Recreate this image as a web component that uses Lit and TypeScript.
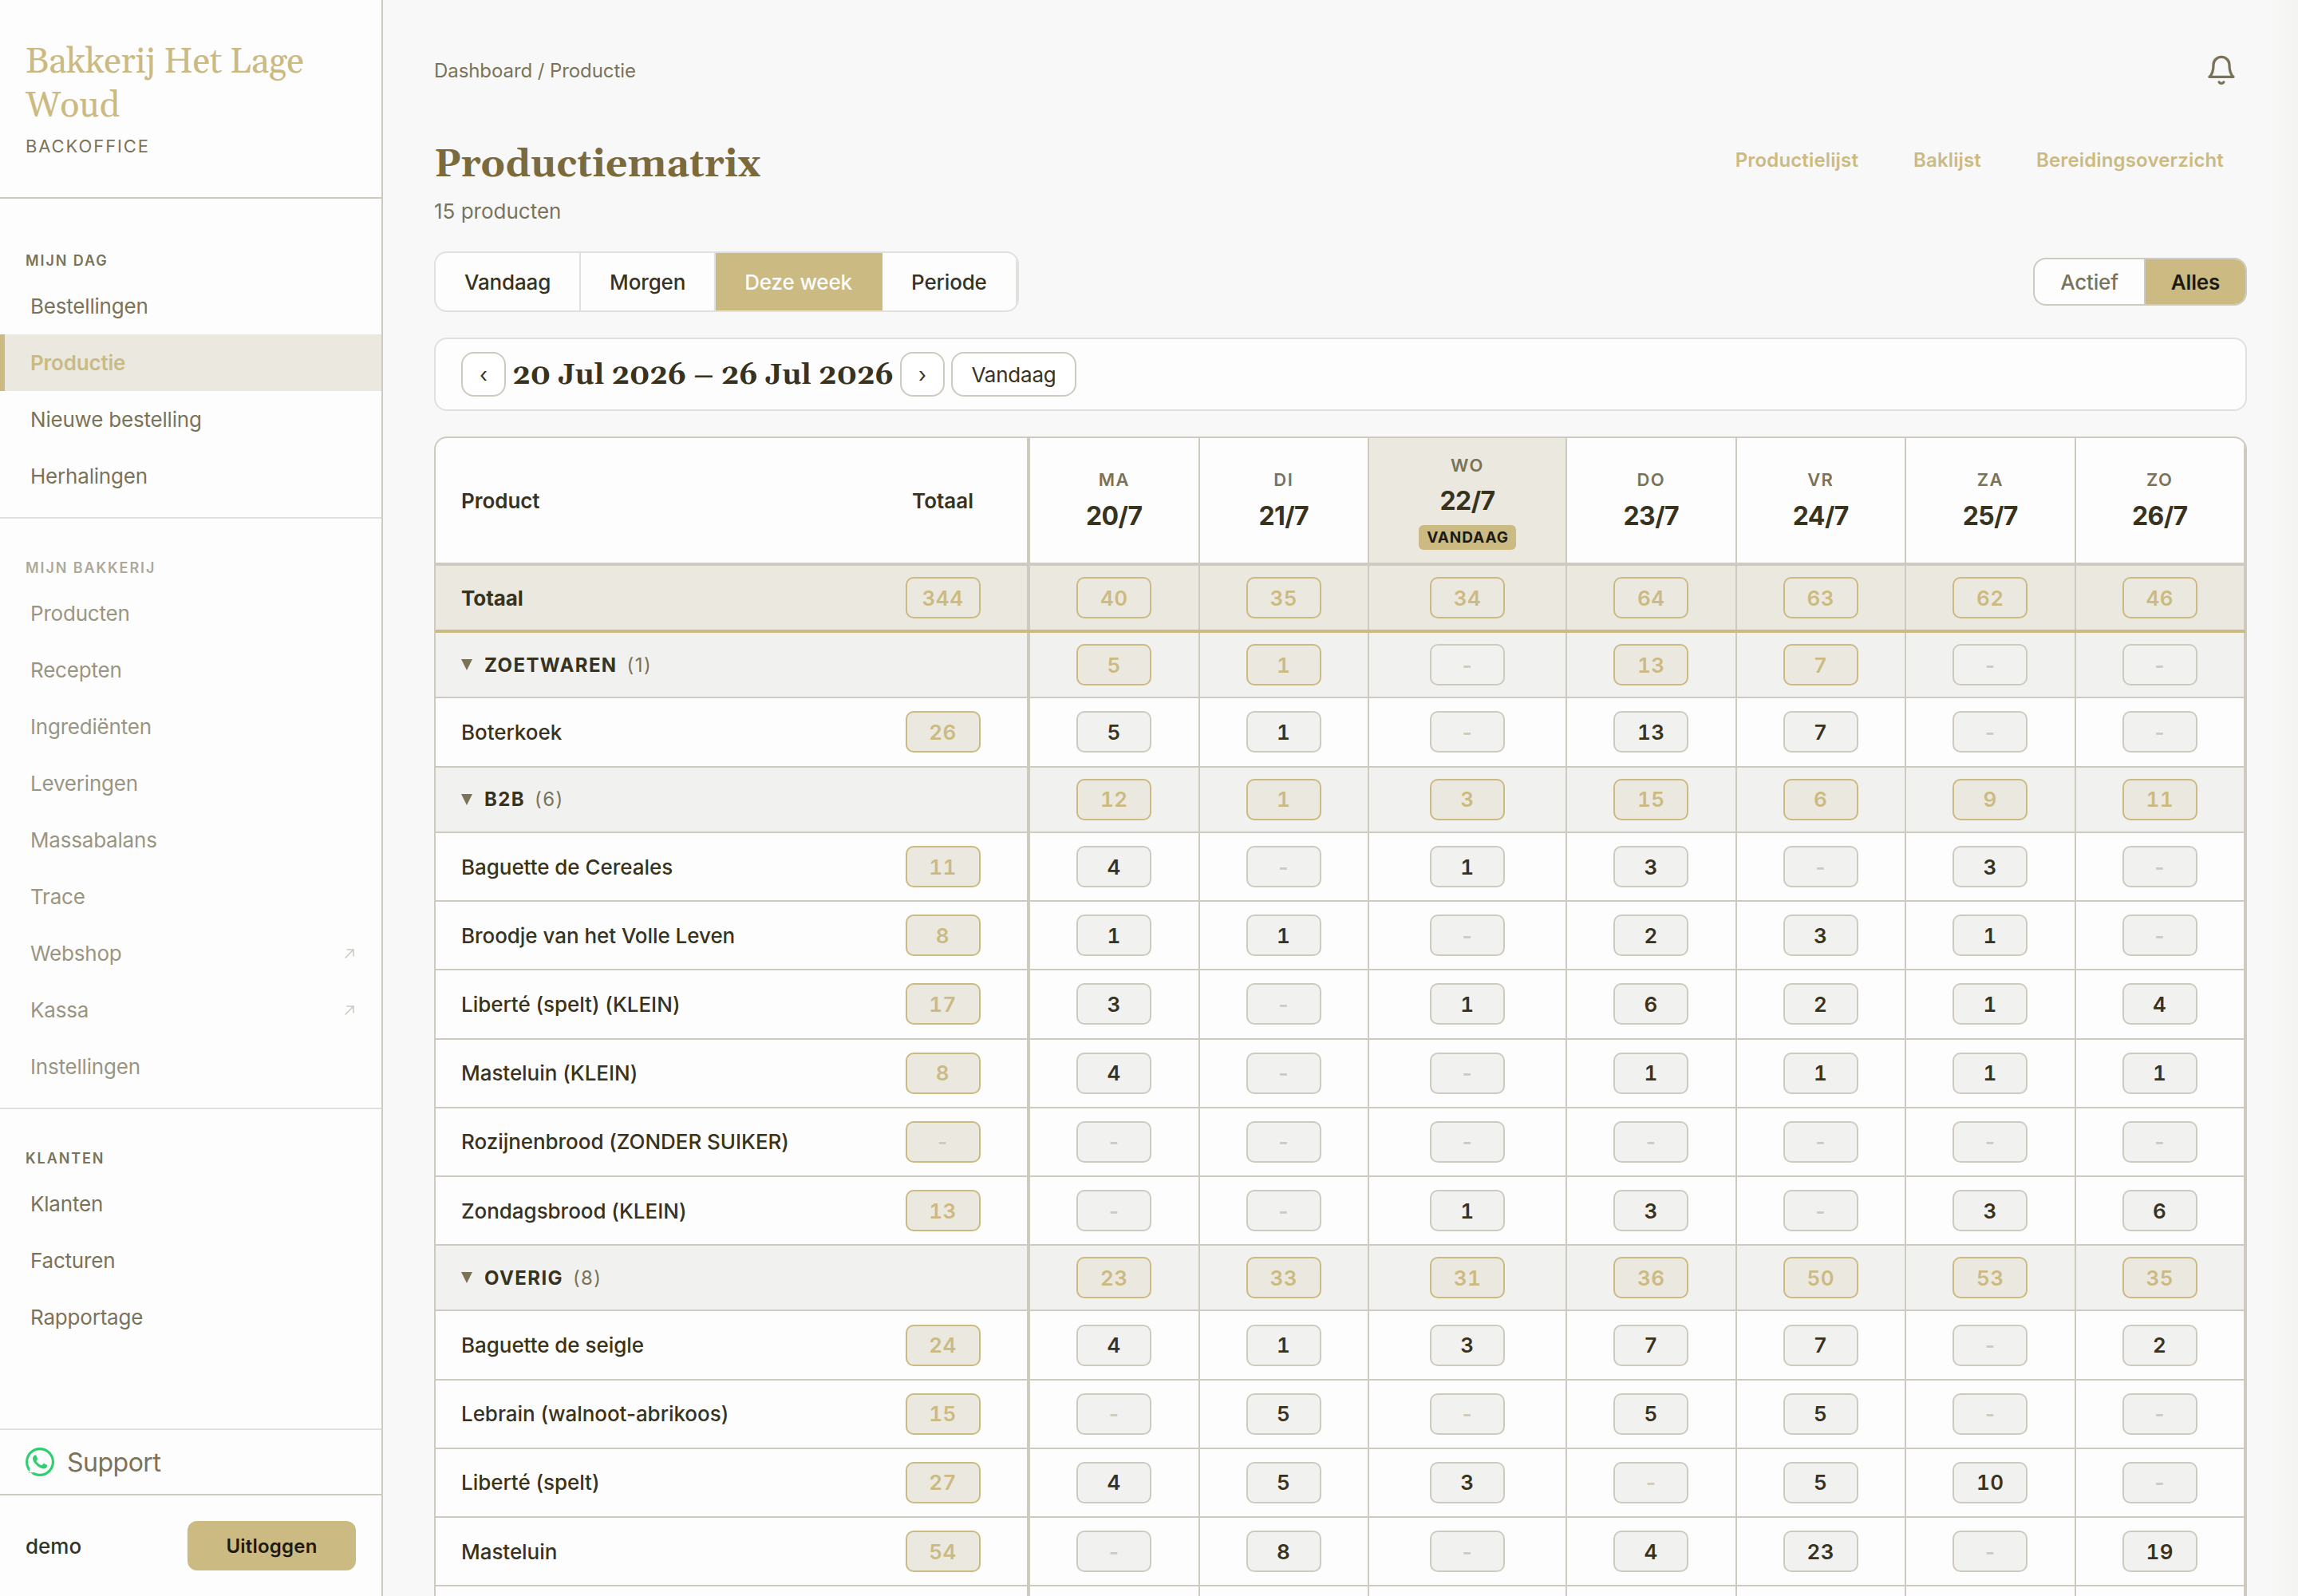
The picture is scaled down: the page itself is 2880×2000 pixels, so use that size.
import { LitElement, html, css, nothing } from 'lit';
import { customElement, property } from 'lit/decorators.js';
import { classMap } from 'lit/directives/class-map.js';

interface NavItem {
  label: string;
  active?: boolean;
  external?: boolean;
}

interface NavSection {
  title: string;
  muted?: boolean;
  items: NavItem[];
}

interface Group {
  name: string;
  count: number;
  days: number[];
  products: { name: string; total: number; days: number[] }[];
}

const NAV: NavSection[] = [
  {
    title: 'Mijn dag',
    items: [
      { label: 'Bestellingen' },
      { label: 'Productie', active: true },
      { label: 'Nieuwe bestelling' },
      { label: 'Herhalingen' },
    ],
  },
  {
    title: 'Mijn bakkerij',
    muted: true,
    items: [
      { label: 'Producten' },
      { label: 'Recepten' },
      { label: 'Ingrediënten' },
      { label: 'Leveringen' },
      { label: 'Massabalans' },
      { label: 'Trace' },
      { label: 'Webshop', external: true },
      { label: 'Kassa', external: true },
      { label: 'Instellingen' },
    ],
  },
  {
    title: 'Klanten',
    items: [{ label: 'Klanten' }, { label: 'Facturen' }, { label: 'Rapportage' }],
  },
];

const DAYS = [
  { name: 'ma', date: '20/7' },
  { name: 'di', date: '21/7' },
  { name: 'wo', date: '22/7', today: true },
  { name: 'do', date: '23/7' },
  { name: 'vr', date: '24/7' },
  { name: 'za', date: '25/7' },
  { name: 'zo', date: '26/7' },
];

const TOTALS = [40, 35, 34, 64, 63, 62, 46];

const GROUPS: Group[] = [
  {
    name: 'Zoetwaren',
    count: 1,
    days: [5, 1, 0, 13, 7, 0, 0],
    products: [{ name: 'Boterkoek', total: 26, days: [5, 1, 0, 13, 7, 0, 0] }],
  },
  {
    name: 'B2B',
    count: 6,
    days: [12, 1, 3, 15, 6, 9, 11],
    products: [
      { name: 'Baguette de Cereales', total: 11, days: [4, 0, 1, 3, 0, 3, 0] },
      { name: 'Broodje van het Volle Leven', total: 8, days: [1, 1, 0, 2, 3, 1, 0] },
      { name: 'Liberté (spelt) (KLEIN)', total: 17, days: [3, 0, 1, 6, 2, 1, 4] },
      { name: 'Masteluin (KLEIN)', total: 8, days: [4, 0, 0, 1, 1, 1, 1] },
      { name: 'Rozijnenbrood (ZONDER SUIKER)', total: 0, days: [0, 0, 0, 0, 0, 0, 0] },
      { name: 'Zondagsbrood (KLEIN)', total: 13, days: [0, 0, 1, 3, 0, 3, 6] },
    ],
  },
  {
    name: 'Overig',
    count: 8,
    days: [23, 33, 31, 36, 50, 53, 35],
    products: [
      { name: 'Baguette de seigle', total: 24, days: [4, 1, 3, 7, 7, 0, 2] },
      { name: 'Lebrain (walnoot-abrikoos)', total: 15, days: [0, 5, 0, 5, 5, 0, 0] },
      { name: 'Liberté (spelt)', total: 27, days: [4, 5, 3, 0, 5, 10, 0] },
      { name: 'Masteluin', total: 54, days: [0, 8, 0, 4, 23, 0, 19] },
    ],
  },
];

@customElement('side-nav')
class SideNav extends LitElement {
  static styles = css`
    :host {
      display: flex;
      flex-direction: column;
      box-sizing: border-box;
      width: 480px;
      height: 100%;
      background: var(--surface);
      border-right: 2px solid var(--line);
    }

    .brand {
      box-sizing: border-box;
      height: 249px;
      padding: 50px 32px 0;
      border-bottom: 2px solid var(--line);
    }

    .brand-name {
      font: 400 44.8px/55px var(--serif);
      letter-spacing: -0.4px;
      color: var(--gold);
    }

    .brand-sub {
      margin-top: 9px;
      font-size: 22px;
      line-height: 28px;
      letter-spacing: 1.9px;
      text-transform: uppercase;
      color: var(--muted);
    }

    nav {
      flex: 1;
      padding-top: 16px;
    }

    .section {
      padding: 48px 0 16px;
      border-bottom: 2px solid var(--line-soft);
    }

    .section:last-child { border-bottom: none; }

    .section-title {
      padding-left: 32px;
      margin-bottom: 7px;
      font-size: 18px;
      font-weight: 600;
      line-height: 28px;
      letter-spacing: 1.9px;
      text-transform: uppercase;
      color: var(--muted);
    }

    .item {
      display: flex;
      align-items: center;
      justify-content: space-between;
      box-sizing: border-box;
      height: 71px;
      padding: 0 32px;
      border-left: 6px solid transparent;
      font-size: 26px;
      letter-spacing: -0.2px;
      color: var(--muted);
    }

    .item.active {
      background: var(--sand);
      border-left-color: var(--gold);
      font-weight: 600;
      color: var(--gold);
    }

    .muted .section-title { opacity: 0.6; }
    .muted .item { opacity: 0.75; }

    .external {
      width: 12px;
      height: 12px;
      margin-right: 2px;
      opacity: 0.5;
    }

    .support {
      display: flex;
      align-items: center;
      gap: 16px;
      height: 80px;
      padding-left: 32px;
      border-top: 2px solid var(--line-soft);
      font-size: 32px;
      letter-spacing: -0.5px;
      color: var(--muted);
    }

    .support svg {
      width: 36px;
      height: 36px;
    }

    .user {
      display: flex;
      align-items: center;
      justify-content: space-between;
      height: 126px;
      padding: 0 32px;
      border-top: 2px solid var(--line);
      font-size: 26px;
      font-weight: 500;
    }

    .logout {
      width: 211px;
      height: 62px;
      border: none;
      border-radius: 12px;
      background: var(--gold);
      font: 600 24px var(--sans);
      letter-spacing: 0.2px;
      color: #1c1a12;
    }
  `;

  render() {
    return html`
      <div class="brand">
        <div class="brand-name">Bakkerij Het Lage Woud</div>
        <div class="brand-sub">Backoffice</div>
      </div>
      <nav>
        ${NAV.map(
          (section) => html`
            <div class=${classMap({ section: true, muted: !!section.muted })}>
              <div class="section-title">${section.title}</div>
              ${section.items.map(
                (item) => html`
                  <div class=${classMap({ item: true, active: !!item.active })}>
                    <span>${item.label}</span>
                    ${item.external
                      ? html`<svg class="external" viewBox="0 0 12 12" fill="none" stroke="currentColor" stroke-width="1.5">
                          <path d="M0.5 11.5L11 1M2.5 1H11V9.5" />
                        </svg>`
                      : nothing}
                  </div>
                `
              )}
            </div>
          `
        )}
      </nav>
      <div class="support">
        <svg viewBox="0 0 24 24" fill="#2fcf70">
          <path d="M17.472 14.382c-.297-.149-1.758-.867-2.03-.967-.273-.099-.471-.148-.67.15-.197.297-.767.966-.94 1.164-.173.199-.347.223-.644.075-.297-.15-1.255-.463-2.39-1.475-.883-.788-1.48-1.761-1.653-2.059-.173-.297-.018-.458.13-.606.134-.133.298-.347.446-.52.149-.174.198-.298.298-.497.099-.198.05-.371-.025-.52-.075-.149-.669-1.612-.916-2.207-.242-.579-.487-.5-.669-.51-.173-.008-.371-.01-.57-.01-.198 0-.52.074-.792.372-.272.297-1.04 1.016-1.04 2.479 0 1.462 1.065 2.875 1.213 3.074.149.198 2.096 3.2 5.077 4.487.709.306 1.262.489 1.694.625.712.227 1.36.195 1.871.118.571-.085 1.758-.719 2.006-1.413.248-.694.248-1.289.173-1.413-.074-.124-.272-.198-.57-.347" />
          <path fill-rule="evenodd" d="M12 0a12 12 0 1 0 0 24 12 12 0 0 0 0-24zM12 2.1a9.9 9.9 0 1 1-4.9 18.5L3.1 21.1 3.7 17.4A9.9 9.9 0 0 1 12 2.1z" />
        </svg>
        <span>Support</span>
      </div>
      <div class="user">
        <span>demo</span>
        <button class="logout">Uitloggen</button>
      </div>
    `;
  }
}

@customElement('qty-box')
class QtyBox extends LitElement {
  static styles = css`
    :host { display: block; }

    .box {
      display: flex;
      align-items: center;
      justify-content: center;
      box-sizing: border-box;
      width: 94px;
      height: 52px;
      border: 2px solid var(--line);
      border-radius: 10px;
      background: var(--cell);
      font-size: 26px;
      font-weight: 600;
      font-variant-numeric: tabular-nums;
      letter-spacing: 0.5px;
      color: var(--ink);
    }

    .box.gold {
      background: var(--sand);
      border-color: var(--gold);
      color: var(--gold);
    }

    .box.empty { color: var(--line); }
  `;

  @property({ type: Number }) value = 0;
  @property({ type: Boolean }) gold = false;

  render() {
    return html`
      <div class=${classMap({ box: true, gold: this.gold, empty: !this.value })}>${this.value || '-'}</div>
    `;
  }
}

@customElement('production-matrix')
class ProductionMatrix extends LitElement {
  static styles = css`
    :host {
      display: block;
      box-sizing: border-box;
      border: 2px solid var(--line);
      border-radius: 16px;
      overflow: hidden;
      background: var(--surface);
    }

    .row {
      display: grid;
      grid-template-columns: 530px 215px 1fr 1fr 248px 1fr 1fr 1fr 1fr;
      box-sizing: border-box;
      height: 86.2px;
      border-bottom: 2px solid var(--line);
    }

    .row > div {
      display: flex;
      align-items: center;
      justify-content: center;
      border-right: 2px solid var(--line);
    }

    .row > .name {
      justify-content: flex-start;
      padding-left: 32px;
      border-right: none;
      font-size: 26px;
      font-weight: 500;
      letter-spacing: -0.05px;
    }

    .row > .total { border-right-width: 4px; }

    .row.head {
      height: 160px;
      border-bottom-width: 4px;
      font-size: 26px;
      font-weight: 600;
    }

    .head > .name { font-weight: 600; }

    .head > .day {
      flex-direction: column;
      padding-top: 2px;
    }

    .head > .today { background: var(--sand); }

    .day-name {
      font-size: 22px;
      line-height: 30px;
      letter-spacing: 1.4px;
      text-transform: uppercase;
      color: var(--muted);
    }

    .day-date {
      margin-top: 8px;
      font-size: 32px;
      font-weight: 700;
      line-height: 46px;
      letter-spacing: -0.6px;
    }

    .today .day-date { margin-top: 7px; }

    .today-badge {
      height: 31px;
      margin-top: 7px;
      padding: 0 9px 0 10px;
      border-radius: 6px;
      background: var(--gold);
      font-size: 19px;
      font-weight: 700;
      line-height: 31px;
      letter-spacing: 0.9px;
      text-transform: uppercase;
      color: #1c1a12;
    }

    .row.sum {
      height: 84px;
      border-bottom: 4px solid var(--gold);
      background: var(--sand);
    }

    .sum > .name { font-weight: 700; }

    .row.group {
      height: 82.4px;
      background: var(--cell);
    }

    .group > .name {
      font-size: 24px;
      font-weight: 700;
      letter-spacing: 1.4px;
    }

    .caret {
      width: 14px;
      height: 14px;
      margin-right: 15px;
      color: var(--muted);
    }

    .group-name { text-transform: uppercase; }

    .count {
      margin-left: 12px;
      font-weight: 400;
      color: var(--muted);
    }
  `;

  private _days(days: number[], gold = false) {
    return days.map(
      (n) => html`<div><qty-box .value=${n} .gold=${gold && n > 0}></qty-box></div>`
    );
  }

  render() {
    return html`
      <div class="row head">
        <div class="name">Product</div>
        <div class="total">Totaal</div>
        ${DAYS.map(
          (day) => html`
            <div class=${classMap({ day: true, today: !!day.today })}>
              <span class="day-name">${day.name}</span>
              <span class="day-date">${day.date}</span>
              ${day.today ? html`<span class="today-badge">Vandaag</span>` : nothing}
            </div>
          `
        )}
      </div>
      <div class="row sum">
        <div class="name">Totaal</div>
        <div class="total"><qty-box .value=${344} gold></qty-box></div>
        ${this._days(TOTALS, true)}
      </div>
      ${GROUPS.map(
        (group) => html`
          <div class="row group">
            <div class="name">
              <svg class="caret" viewBox="0 0 14 14" fill="currentColor"><path d="M0 0h14L7 14z" /></svg>
              <span class="group-name">${group.name}</span>
              <span class="count">(${group.count})</span>
            </div>
            <div class="total"></div>
            ${this._days(group.days, true)}
          </div>
          ${group.products.map(
            (product) => html`
              <div class="row">
                <div class="name">${product.name}</div>
                <div class="total">
                  <qty-box .value=${product.total} gold></qty-box>
                </div>
                ${this._days(product.days)}
              </div>
            `
          )}
        `
      )}
      <div class="row">
        <div class="name"></div>
        <div class="total"></div>
        ${DAYS.map(() => html`<div></div>`)}
      </div>
    `;
  }
}

@customElement('app-root')
class AppRoot extends LitElement {
  static styles = css`
    :host {
      --gold: #cbba82;
      --sand: #ebe8df;
      --cell: #f1f1ef;
      --surface: #fdfdfd;
      --line: #cfcabf;
      --line-soft: #e0e0dc;
      --ink: #38331f;
      --muted: #7a7358;
      --sans: Inter, 'Liberation Sans', sans-serif;
      --serif: Georgia, Gelasio, 'DejaVu Serif', serif;
      display: flex;
      width: 2880px;
      height: 2000px;
      overflow: hidden;
      background: linear-gradient(to right, #f8f8f8 2840px, #f4f4f1 2880px);
      font-family: var(--sans);
      color: var(--ink);
    }

    side-nav { flex: none; }

    main {
      flex: none;
      box-sizing: border-box;
      width: 2336px;
      padding: 56px 0 0 64px;
    }

    .topbar {
      display: flex;
      align-items: center;
      justify-content: space-between;
      height: 64px;
      padding-right: 12px;
      font-size: 24px;
      letter-spacing: -0.08px;
      color: var(--muted);
    }

    .bell {
      width: 40px;
      height: 40px;
    }

    .heading {
      display: flex;
      justify-content: space-between;
      height: 195px;
    }

    h1 {
      margin: 56px 0 0;
      font: 700 48px/62px var(--serif);
      color: #7a6a3c;
    }

    .subtitle {
      margin-top: 10px;
      font-size: 26px;
      line-height: 34px;
      color: var(--muted);
    }

    .links {
      display: flex;
      gap: 69px;
      padding: 64px 29px 0 0;
      font-size: 24px;
      font-weight: 600;
      line-height: 34px;
      letter-spacing: 0.15px;
      color: var(--gold);
    }

    .filters {
      display: flex;
      align-items: center;
      justify-content: space-between;
      height: 76px;
    }

    .tabs, .toggle {
      display: flex;
      box-sizing: border-box;
      border: 2px solid var(--line-soft);
      border-radius: 16px;
      overflow: hidden;
      background: var(--surface);
    }

    .tabs { height: 76px; }

    .tab {
      display: flex;
      align-items: center;
      justify-content: center;
      box-sizing: border-box;
      padding: 0 36px;
      border-right: 2px solid var(--line-soft);
      font-size: 26px;
      font-weight: 500;
      letter-spacing: -0.15px;
    }

    .tab.active {
      background: var(--gold);
      border-right-color: var(--gold);
      color: #fdfdfd;
    }

    .toggle {
      height: 60px;
      border-color: var(--line);
    }

    .option {
      display: flex;
      align-items: center;
      padding: 0 32px;
      font-size: 26px;
      font-weight: 500;
      letter-spacing: -0.2px;
      color: var(--muted);
    }

    .option.active {
      border-left: 2px solid var(--line);
      background: var(--gold);
      font-weight: 600;
      color: #1c1a12;
    }

    .period {
      display: flex;
      align-items: center;
      gap: 8px;
      box-sizing: border-box;
      height: 92px;
      margin: 32px 0;
      padding-left: 32px;
      border: 2px solid var(--line-soft);
      border-radius: 16px;
      background: var(--surface);
    }

    .period button {
      box-sizing: border-box;
      height: 56px;
      padding: 0;
      border: 2px solid var(--line);
      border-radius: 16px;
      background: #fff;
      font: 400 26px var(--sans);
      letter-spacing: -0.2px;
      color: var(--ink);
    }

    .step { width: 56px; }
    .reset { width: 157px; }

    .range {
      width: 478px;
      padding-top: 4px;
      text-align: center;
      white-space: nowrap;
      font: 700 36px/46px var(--serif);
    }
  `;

  render() {
    return html`
      <side-nav></side-nav>
      <main>
        <div class="topbar">
          <span>Dashboard / Productie</span>
          <svg class="bell" viewBox="0 0 24 24" fill="none" stroke="#7a7358" stroke-width="2" stroke-linecap="round" stroke-linejoin="round">
            <path d="M18 8A6 6 0 0 0 6 8c0 7-3 9-3 9h18s-3-2-3-9" />
            <path d="M13.73 21a2 2 0 0 1-3.46 0" />
          </svg>
        </div>
        <div class="heading">
          <div>
            <h1>Productiematrix</h1>
            <div class="subtitle">15 producten</div>
          </div>
          <div class="links">
            <span>Productielijst</span>
            <span>Baklijst</span>
            <span>Bereidingsoverzicht</span>
          </div>
        </div>
        <div class="filters">
          <div class="tabs">
            ${['Vandaag', 'Morgen', 'Deze week', 'Periode'].map(
              (tab) => html`<div class=${classMap({ tab: true, active: tab === 'Deze week' })}>${tab}</div>`
            )}
          </div>
          <div class="toggle">
            <div class="option">Actief</div>
            <div class="option active">Alles</div>
          </div>
        </div>
        <div class="period">
          <button class="step">‹</button>
          <span class="range">20 Jul 2026 – 26 Jul 2026</span>
          <button class="step">›</button>
          <button class="reset">Vandaag</button>
        </div>
        <production-matrix></production-matrix>
      </main>
    `;
  }
}
